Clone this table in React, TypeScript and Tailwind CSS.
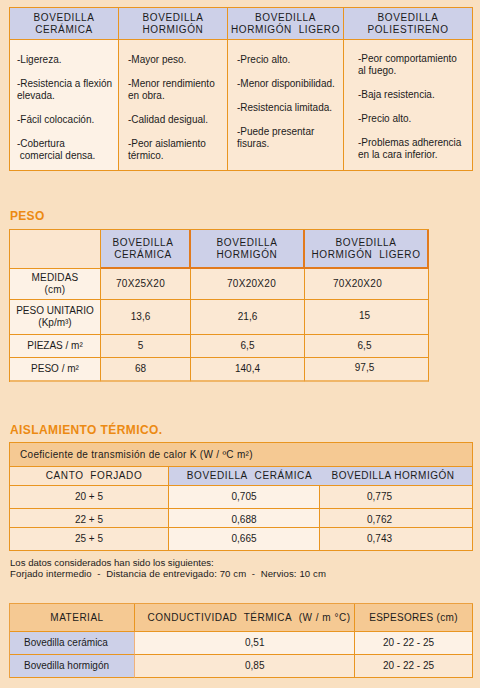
import React from "react";

const H1 = ({ children }: { children: React.ReactNode }) => (
  <div className="h-[32px] bg-[#cdd0e8] border-r border-b border-[#e99520] flex flex-col items-center justify-center text-center text-[10px] leading-[12px] tracking-[0.6px]">
    {children}
  </div>
);

const Body1 = ({ items, cls }: { items: React.ReactNode[]; cls: string }) => (
  <div className={`h-[131px] border-r border-b border-[#e99520] flex flex-col gap-[12px] text-[10px] leading-[12px] ${cls}`}>
    {items.map((it, i) => (
      <div key={i}>{it}</div>
    ))}
  </div>
);

export default function App() {
  return (
    <div className="w-[480px] h-[688px] bg-[#f9e0c1] pl-[9px] pt-[7px] text-[#1b1b1b] font-['Liberation_Sans',Arial,sans-serif] flex flex-col items-start">
      {/* Table 1 */}
      <div className="grid grid-cols-[109px_109px_116px_129px] border-l border-t border-[#e99520]">
        <H1>
          <span>BOVEDILLA</span>
          <span>CERÁMICA</span>
        </H1>
        <H1>
          <span>BOVEDILLA</span>
          <span>HORMIGÓN</span>
        </H1>
        <H1>
          <span>BOVEDILLA</span>
          <span>HORMIGÓN&nbsp; LIGERO</span>
        </H1>
        <H1>
          <span>BOVEDILLA</span>
          <span>POLIESTIRENO</span>
        </H1>
        <Body1
          cls="bg-[#fdf2e6] pl-[7px] pt-[14px]"
          items={[
            "-Ligereza.",
            <>-Resistencia a flexión<br />elevada.</>,
            "-Fácil colocación.",
            <>-Cobertura<br />&nbsp;comercial densa.</>,
          ]}
        />
        <Body1
          cls="bg-[#fbe8d3] pl-[9px] pt-[14px]"
          items={[
            "-Mayor peso.",
            <>-Menor rendimiento<br />en obra.</>,
            "-Calidad desigual.",
            <>-Peor aislamiento<br />térmico.</>,
          ]}
        />
        <Body1
          cls="bg-[#fbe8d3] pl-[9px] pt-[14px]"
          items={[
            "-Precio alto.",
            "-Menor disponibilidad.",
            "-Resistencia limitada.",
            <>-Puede presentar<br />fisuras.</>,
          ]}
        />
        <Body1
          cls="bg-[#fbe8d3] pl-[14px] pt-[13px]"
          items={[
            <>-Peor comportamiento<br />al fuego.</>,
            "-Baja resistencia.",
            "-Precio alto.",
            <>-Problemas adherencia<br />en la cara inferior.</>,
          ]}
        />
      </div>

      {/* PESO */}
      <div className="mt-[38px] ml-[1px] h-[14px] leading-[14px] text-[12px] font-bold tracking-[0.3px] text-[#ec8a12]">PESO</div>

      <div className="mt-[6px] grid grid-cols-[91px_90px_114px_124px] border-l border-t border-[#e99520] text-[10px] leading-[12px] text-center">
        <div className="h-[39px] bg-[#fbe6cf] border-r border-b border-[#e99520]"></div>
        <div className="h-[39px] bg-[#cdd0e8] border-r-2 border-b-2 border-[#e27a1c] flex flex-col items-center justify-center tracking-[0.6px] pr-[4px]">
          <span>BOVEDILLA</span>
          <span>CERÁMICA</span>
        </div>
        <div className="h-[39px] bg-[#cdd0e8] border-r-2 border-b-2 border-[#e27a1c] flex flex-col items-center justify-center tracking-[0.6px]">
          <span>BOVEDILLA</span>
          <span>HORMIGÓN</span>
        </div>
        <div className="h-[39px] bg-[#cdd0e8] border-r-2 border-b-2 border-[#e27a1c] flex flex-col items-center justify-center tracking-[0.6px]">
          <span>BOVEDILLA</span>
          <span>HORMIGÓN&nbsp; LIGERO</span>
        </div>

        <div className="h-[31px] bg-[#fdf2e6] border-r border-b border-[#e99520] flex flex-col items-center justify-center tracking-[0.2px]">
          <span>MEDIDAS</span>
          <span>(cm)</span>
        </div>
        <div className="h-[31px] bg-[#fbe8d3] border-r border-b border-[#e99520] flex items-center justify-center pr-[10px] tracking-[0.3px]">70X25X20</div>
        <div className="h-[31px] bg-[#fbe8d3] border-r border-b border-[#e99520] flex items-center justify-center pl-[8px] tracking-[0.3px]">70X20X20</div>
        <div className="h-[31px] bg-[#fbe8d3] border-r border-b border-[#e99520] flex items-center justify-center pr-[18px] tracking-[0.3px]">70X20X20</div>

        <div className="h-[35px] bg-[#fdf2e6] border-r border-b border-[#e99520] flex flex-col items-center justify-center">
          <span>PESO UNITARIO</span>
          <span>(Kp/m³)</span>
        </div>
        <div className="h-[35px] bg-[#fbe8d3] border-r border-b border-[#e99520] flex items-center justify-center pr-[10px]">13,6</div>
        <div className="h-[35px] bg-[#fbe8d3] border-r border-b border-[#e99520] flex items-center justify-center">21,6</div>
        <div className="h-[35px] bg-[#fbe8d3] border-r border-b border-[#e99520] flex items-center justify-center pr-[4px] pb-[3px]">15</div>

        <div className="h-[23px] bg-[#fdf2e6] border-r border-b border-[#e99520] flex items-center justify-center">PIEZAS / m²</div>
        <div className="h-[23px] bg-[#fbe8d3] border-r border-b border-[#e99520] flex items-center justify-center pr-[10px]">5</div>
        <div className="h-[23px] bg-[#fbe8d3] border-r border-b border-[#e99520] flex items-center justify-center">6,5</div>
        <div className="h-[23px] bg-[#fbe8d3] border-r border-b border-[#e99520] flex items-center justify-center pr-[4px]">6,5</div>

        <div className="h-[24px] bg-[#fdf2e6] border-r border-b-2 border-[#e99520] border-b-[#f0b668] flex items-center justify-center">PESO / m²</div>
        <div className="h-[24px] bg-[#fbe8d3] border-r border-b-2 border-[#e99520] border-b-[#f0b668] flex items-center justify-center pr-[10px]">68</div>
        <div className="h-[24px] bg-[#fbe8d3] border-r border-b-2 border-[#e99520] border-b-[#f0b668] flex items-center justify-center">140,4</div>
        <div className="h-[24px] bg-[#fbe8d3] border-r border-b-2 border-[#e99520] border-b-[#f0b668] flex items-center justify-center pr-[4px] pb-[3px]">97,5</div>
      </div>

      {/* AISLAMIENTO */}
      <div className="mt-[41px] ml-[1px] h-[14px] leading-[14px] text-[12px] font-bold tracking-[0.4px] text-[#ec8a12]">AISLAMIENTO TÉRMICO.</div>

      <div className="mt-[5px] grid grid-cols-[159px_151px_153px] border-l border-t border-[#e99520] text-[10px] leading-[12px]">
        <div className="col-span-3 h-[24px] bg-[#f5c993] border-r border-b border-[#e99520] flex items-center pl-[10px] tracking-[0.3px]">
          Coeficiente de transmisión de calor K (W / ºC m²)
        </div>
        <div className="h-[19px] bg-[#fbe6cf] border-r border-b border-[#e99520] flex items-center justify-center pl-[10px] tracking-[0.6px]">CANTO&nbsp; FORJADO</div>
        <div className="h-[19px] bg-[#cdd0e8] border-b border-[#e99520] flex items-center justify-center pl-[10px] tracking-[0.6px]">BOVEDILLA&nbsp; CERÁMICA</div>
        <div className="h-[19px] bg-[#cdd0e8] border-r border-b border-[#e99520] flex items-center justify-center pr-[6px] tracking-[0.5px]">BOVEDILLA HORMIGÓN</div>

        <div className="h-[23px] bg-[#fbe8d3] border-r border-b border-[#e99520] flex items-center justify-center">20 + 5</div>
        <div className="h-[23px] bg-[#fdf2e6] border-r border-b border-[#e99520] flex items-center justify-center">0,705</div>
        <div className="h-[23px] bg-[#fbe8d3] border-r border-b border-[#e99520] flex items-center pl-[47px]">0,775</div>

        <div className="h-[19px] bg-[#fbe8d3] border-r border-b border-[#e99520] flex items-center justify-center pt-[3px]">22 + 5</div>
        <div className="h-[19px] bg-[#fdf2e6] border-r border-b border-[#e99520] flex items-center justify-center pt-[3px]">0,688</div>
        <div className="h-[19px] bg-[#fbe8d3] border-r border-b border-[#e99520] flex items-center pl-[47px] pt-[3px]">0,762</div>

        <div className="h-[23px] bg-[#fbe8d3] border-r border-b border-[#e99520] flex items-center justify-center">25 + 5</div>
        <div className="h-[23px] bg-[#fdf2e6] border-r border-b border-[#e99520] flex items-center justify-center">0,665</div>
        <div className="h-[23px] bg-[#fbe8d3] border-r border-b border-[#e99520] flex items-center pl-[47px]">0,743</div>
      </div>

      <div className="mt-[6px] ml-[1px] text-[9.6px] leading-[11px]">
        <div>Los datos considerados han sido los siguientes:</div>
        <div className="tracking-[0.1px]">Forjado intermedio&nbsp; -&nbsp; Distancia de entrevigado: 70 cm&nbsp; -&nbsp; Nervios: 10 cm</div>
      </div>

      <div className="mt-[24px] grid grid-cols-[125px_220px_118px] border-l border-t border-[#eba040] text-[10px] leading-[12px]">
        <div className="h-[28px] bg-[#f5c993] border-r border-b border-[#e99520] flex items-center justify-center pl-[10px] tracking-[0.5px]">MATERIAL</div>
        <div className="h-[28px] bg-[#f5c993] border-r border-b border-[#e99520] flex items-center justify-center pl-[9px] tracking-[0.5px]">CONDUCTIVIDAD&nbsp; TÉRMICA&nbsp; (W / m °C)</div>
        <div className="h-[28px] bg-[#f5c993] border-r border-b border-[#e99520] flex items-center justify-center tracking-[0.3px]">ESPESORES (cm)</div>

        <div className="h-[23px] bg-[#cdd0e8] border-r border-b border-[#e99520] border-r-[#f0b27a] flex items-center pl-[14px]">Bovedilla cerámica</div>
        <div className="h-[23px] bg-[#fdf2e6] border-r border-b border-[#e99520] flex items-center pl-[110px]">0,51</div>
        <div className="h-[23px] bg-[#fdf2e6] border-r border-b border-[#e99520] flex items-center justify-center pr-[10px]">20 - 22 - 25</div>

        <div className="h-[23px] bg-[#cdd0e8] border-r border-b border-[#e99520] border-r-[#f0b27a] flex items-center pl-[14px]">Bovedilla hormigón</div>
        <div className="h-[23px] bg-[#fbe8d3] border-r border-b border-[#e99520] flex items-center pl-[110px]">0,85</div>
        <div className="h-[23px] bg-[#fbe8d3] border-r border-b border-[#e99520] flex items-center justify-center pr-[10px]">20 - 22 - 25</div>
      </div>
    </div>
  );
}
